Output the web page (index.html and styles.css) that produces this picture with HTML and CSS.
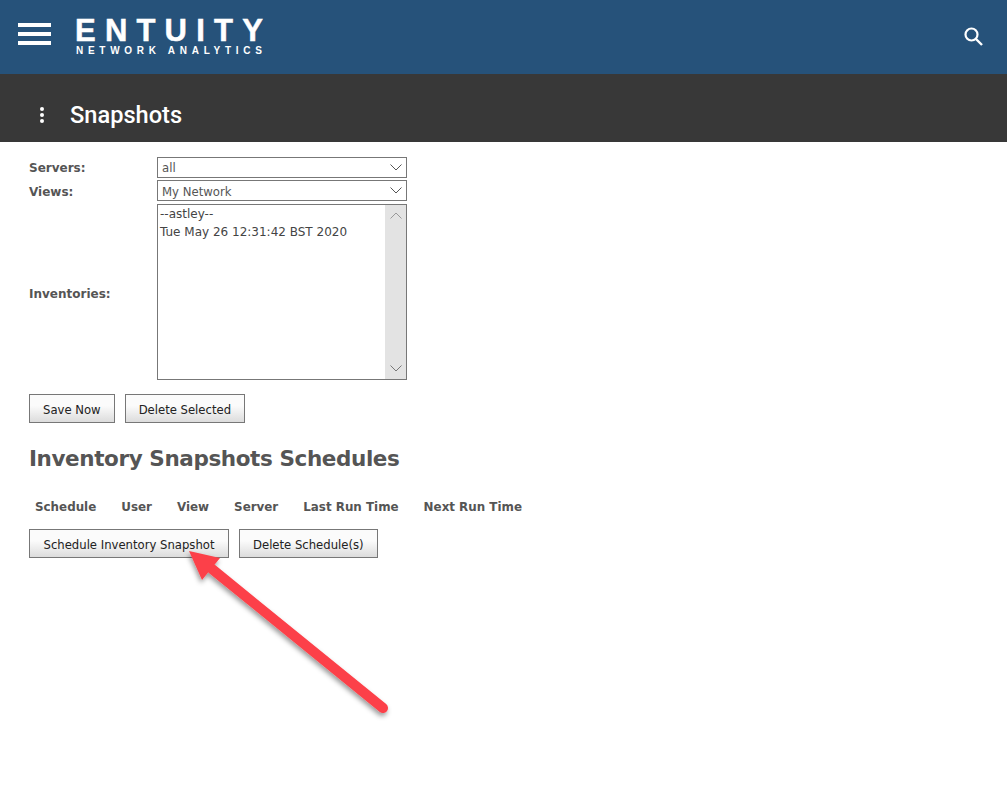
FILE: index.html
```html
<!DOCTYPE html>
<html lang="en">
<head>
<meta charset="utf-8">
<title>Snapshots</title>
<link rel="stylesheet" href="styles.css">
</head>
<body>
<header class="topbar">
  <div class="burger"><span></span><span></span><span></span></div>
  <div class="logo">
    <div class="logo-main">ENTUITY</div>
    <div class="logo-sub">NETWORK ANALYTICS</div>
  </div>
  <svg class="search" width="24" height="24" viewBox="0 0 24 24"><circle cx="10.5" cy="10.5" r="6" fill="none" stroke="#fff" stroke-width="2.2"/><path d="M15 15l6 6" stroke="#fff" stroke-width="2.4" fill="none"/></svg>
</header>
<div class="titlebar">
  <div class="kebab"><span></span><span></span><span></span></div>
  <h1>Snapshots</h1>
</div>
<main class="content">
  <div class="form">
    <label class="label">Servers:</label>
    <div class="select">all<svg class="chev" width="12" height="7" viewBox="0 0 12 7"><path d="M.5.5L6 6 11.500.5" fill="none" stroke="#555"/></svg></div>
    <label class="label label-views">Views:</label>
    <div class="select select-views">My Network<svg class="chev" width="12" height="7" viewBox="0 0 12 7"><path d="M.5.5L6 6 11.500.5" fill="none" stroke="#555"/></svg></div>
    <label class="label label-inv">Inventories:</label>
    <div class="listbox">
      <div class="options">
        <div>--astley--</div>
        <div>Tue May 26 12:31:42 BST 2020</div>
      </div>
      <div class="scrollbar">
        <svg width="12" height="7" viewBox="0 0 12 7"><path d="M.5 6.500L6 1l5.500 5.500" fill="none" stroke="#999"/></svg>
        <svg width="12" height="7" viewBox="0 0 12 7"><path d="M.5.5L6 6 11.500.5" fill="none" stroke="#777"/></svg>
      </div>
    </div>
  </div>
  <div class="buttons first">
    <button class="btn">Save Now</button>
    <button class="btn">Delete Selected</button>
  </div>
  <h2>Inventory Snapshots Schedules</h2>
  <table class="schedules">
    <thead>
      <tr><th>Schedule</th><th>User</th><th>View</th><th>Server</th><th>Last Run Time</th><th>Next Run Time</th></tr>
    </thead>
  </table>
  <div class="buttons second">
    <button class="btn btn-wide">Schedule Inventory Snapshot</button>
    <button class="btn">Delete Schedule(s)</button>
  </div>
</main>
<svg class="arrow" width="240" height="200" viewBox="0 0 240 200">
  <defs><filter id="sh" x="-20%" y="-20%" width="140%" height="140%"><feDropShadow dx="-1" dy="3" stdDeviation="2.500" flood-color="#000" flood-opacity=".4"/></filter></defs>
  <g filter="url(#sh)" transform="translate(-170 -530)">
    <path d="M212 569L383 708" stroke="#fc4148" stroke-width="10" stroke-linecap="round" fill="none"/>
    <path d="M189 551L220 558 202 580Z" fill="#fc4148"/>
  </g>
</svg>
</body>
</html>
```
FILE: styles.css
```css
* { box-sizing: border-box; }
html, body { margin: 0; padding: 0; }
body {
  position: relative;
  height: 791px;
  overflow: hidden;
  background: #fff;
  color: #222;
  font-family: "DejaVu Sans", sans-serif;
  font-size: 12px;
}
.topbar {
  height: 74px;
  background: #26527a;
  display: flex;
  align-items: center;
  padding: 0 22px 0 18px;
}
.burger { width: 33px; display: flex; flex-direction: column; gap: 5px; margin-bottom: 6px; }
.burger span { height: 4px; background: #fff; }
.logo { margin-left: 24px; color: #fff; font-family: "Liberation Sans", sans-serif; font-weight: 700; margin-bottom: 1px; }
.logo-main { font-size: 31px; line-height: 28px; letter-spacing: 9.2px; white-space: nowrap; -webkit-text-stroke: .5px #fff; }
.logo-sub { font-size: 10px; line-height: 12px; letter-spacing: 4.72px; white-space: nowrap; margin-left: 1px; }
.search { margin-left: auto; margin-bottom: 3px; }
.titlebar {
  height: 68px;
  background: #383838;
  display: flex;
  align-items: center;
  padding-left: 40px;
  padding-top: 14px;
  color: #fff;
}
.kebab { width: 4px; display: flex; flex-direction: column; gap: 2px; }
.kebab span { width: 4px; height: 4px; border-radius: 50%; background: #fff; }
.titlebar h1 { margin: 0 0 0 26px; font: 500 23.6px/28px Roboto, sans-serif; }
.content { padding: 15px 0 0 29px; }
.form { display: grid; grid-template-columns: 128px 250px; row-gap: 2px; align-items: center; }
.label { font-weight: 700; font-size: 12px; color: #555; }
.label-views { padding-top: 2px; }
.label-inv { padding-top: 4px; }
.select {
  height: 21px;
  border: 1px solid #777;
  padding: 1px 16px 0 4px;
  font-size: 11.700px;
  line-height: 19px;
  color: #555;
  position: relative;
}
.select-views { padding-top: 2px; }
.chev { position: absolute; right: 4px; top: 6px; }
.listbox { height: 176px; margin-top: 1px; border: 1px solid #777; display: flex; }
.options { flex: 1; padding: 0 2px; line-height: 18px; color: #444; }
.scrollbar { width: 21px; background: #e3e3e3; display: flex; flex-direction: column; justify-content: space-between; align-items: center; padding: 7px 0; }
.buttons { display: flex; gap: 10px; }
.buttons.first { margin-top: 14px; }
.buttons.second { margin-top: 10px; }
.btn {
  height: 29px;
  padding: 2px 13px 0;
  border: 1px solid #777;
  background: linear-gradient(#fbfbfb, #fbfbfb 40%, #dcdcdc);
  color: #222;
  font: 11.650px "DejaVu Sans", sans-serif;
}
.btn-wide { width: 200px; }
h2 { margin: 21px 0 0; font-size: 21.500px; letter-spacing: -.4px; line-height: 30px; font-weight: 700; color: #555; }
.schedules { margin-top: 21px; margin-bottom: -1px; border-collapse: collapse; }
.schedules th { padding: 5px 12.500px; font-size: 11.900px; line-height: 15px; color: #555; text-align: left; white-space: nowrap; }
.schedules th:first-child { padding-left: 6px; }
.arrow { position: absolute; left: 170px; top: 530px; pointer-events: none; }
```
